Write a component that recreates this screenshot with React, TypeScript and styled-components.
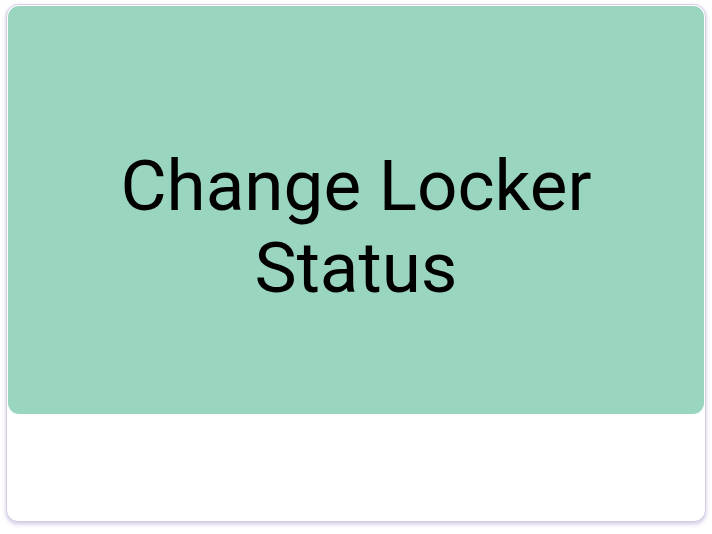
import React from "react";
import styled, { createGlobalStyle } from "styled-components";

const GlobalStyle = createGlobalStyle`
  html, body { margin: 0; padding: 0; background: #ffffff; }
  body { font-family: Roboto, "Noto Sans", sans-serif; }
  * { box-sizing: border-box; }
`;

const Page = styled.div`
  width: 712px;
  height: 534px;
  padding: 4px 6px 12px 6px;
  display: flex;
`;

const Card = styled.div`
  flex: 1;
  display: flex;
  flex-direction: column;
  background: #ffffff;
  border-radius: 12px;
  border: 1px solid #d6cce6;
  box-shadow: 0 2px 4px rgba(120, 90, 170, 0.35);
  padding: 1px;
`;

const Banner = styled.div`
  height: 408px;
  background: #9ad5bf;
  border-radius: 11px;
  display: flex;
  align-items: center;
  justify-content: center;
  padding-top: 33px;
`;

const Title = styled.h1`
  margin: 0;
  font-family: Roboto, sans-serif;
  font-weight: 400;
  font-size: 71px;
  line-height: 82px;
  color: #000000;
  text-align: center;
`;

const Footer = styled.div`
  flex: 1;
`;

export default function App() {
  return (
    <>
      <GlobalStyle />
      <Page>
        <Card>
          <Banner>
            <Title>
              Change Locker
              <br />
              Status
            </Title>
          </Banner>
          <Footer />
        </Card>
      </Page>
    </>
  );
}
